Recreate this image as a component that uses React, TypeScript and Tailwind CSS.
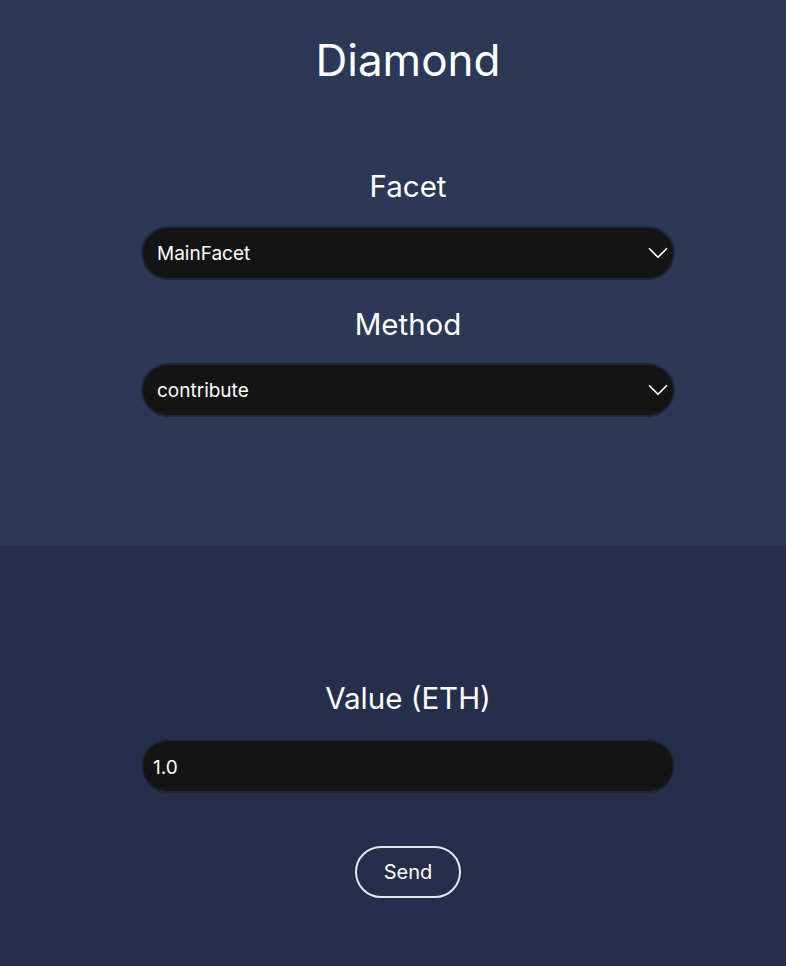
import { ChevronDown } from "lucide-react";

const Select = ({ value }: { value: string }) => (
    <div className="relative w-[534px]">
        <select
            defaultValue={value}
            className="w-full h-[54px] appearance-none rounded-full border-2 border-[#1f2640] bg-[#141414] pl-[14px] pr-12 pt-[3px] text-[19px] text-white outline-none"
        >
            <option>{value}</option>
        </select>
        <ChevronDown
            size={34}
            strokeWidth={1.2}
            className="pointer-events-none absolute right-[0px] top-1/2 -translate-y-1/2 text-white"
        />
    </div>
);

const App = () => {
    return (
        <div className="min-h-screen font-['Inter',sans-serif] text-white">
            {/* Seleção */}
            <div className="h-[546px] bg-[#2d3756] pl-[30px] flex flex-col items-center">
                <h1 className="mt-[32px] text-[44px] leading-[56px]">Diamond</h1>
                <h2 className="mt-[80px] text-[29.5px] leading-[36px]">Facet</h2>
                <div className="mt-[22px]">
                    <Select value="MainFacet" />
                </div>
                <h2 className="mt-[26px] text-[29.5px] leading-[36px]">Method</h2>
                <div className="mt-[21px]">
                    <Select value="contribute" />
                </div>
            </div>

            {/* Parâmetros */}
            <div className="h-[420px] bg-[#262e4c] pl-[30px] flex flex-col items-center">
                <h2 className="mt-[134px] text-[29.5px] leading-[36px]">Value (ETH)</h2>
                <input
                    defaultValue="1.0"
                    className="mt-[23px] w-[534px] h-[54px] rounded-full border-2 border-[#1f2640] bg-[#141414] px-[10px] pt-[2px] text-[19px] text-white outline-none"
                />
                <button className="mt-[53px] h-[52px] w-[106px] rounded-full border-2 border-[#e5e7eb] text-[20px]">
                    Send
                </button>
            </div>
        </div>
    );
};

export default App;
